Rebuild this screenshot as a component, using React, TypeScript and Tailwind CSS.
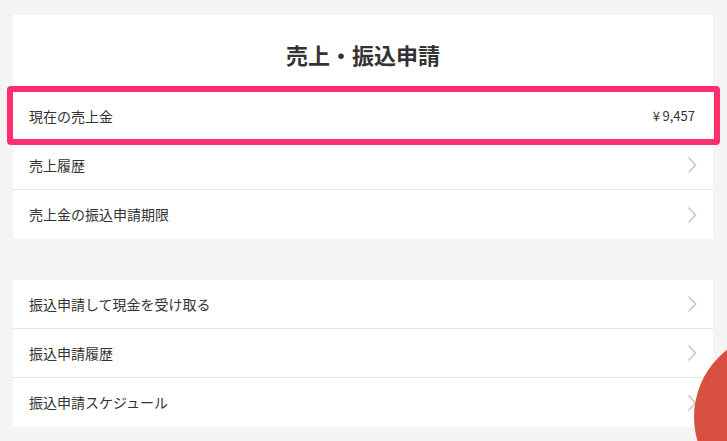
import { ReactNode } from 'react';

function Chevron() {
  return (
    <svg width="10" height="18" viewBox="0 0 10 18" fill="none" className="shrink-0">
      <path d="M1.5 1.5 L8.5 9 L1.5 16.5" stroke="#c9c9c9" strokeWidth="1.6" />
    </svg>
  );
}

function Row({ children, right, last }: { children: ReactNode; right?: ReactNode; last?: boolean }) {
  return (
    <div
      className={`flex h-[49px] items-center justify-between pl-4 pr-[16px] ${
        last ? '' : 'border-b border-[#e6e6e6]'
      }`}
    >
      <span className="text-[14px] text-[#333]">{children}</span>
      {right ?? <Chevron />}
    </div>
  );
}

export default function App() {
  return (
    <div
      className="relative h-[441px] w-full overflow-hidden bg-[#f4f4f4] px-[13px] pt-[15px]"
      style={{ fontFamily: '"Noto Sans CJK JP", "Noto Sans", sans-serif' }}
    >
      {/* Sales card */}
      <div className="w-[700px] bg-white">
        <div className="flex h-[77px] justify-center pt-[25px]">
          <h1 className="text-[22px] font-bold leading-[28px] text-[#333]">売上・振込申請</h1>
        </div>

        <div className="relative">
          <Row right={<span className="pr-[2px] text-[13px] text-[#333]">¥&thinsp;9,457</span>}>
            現在の売上金
          </Row>
          {/* highlight frame */}
          <div className="pointer-events-none absolute -top-[6px] -bottom-[4px] -left-[6px] -right-[7px] rounded-[4px] border-[6px] border-[#ff2e6f]" />
        </div>
        <Row>売上履歴</Row>
        <Row last>売上金の振込申請期限</Row>
      </div>

      {/* Transfer card */}
      <div className="mt-[41px] w-[700px] bg-white">
        <Row>振込申請して現金を受け取る</Row>
        <Row>振込申請履歴</Row>
        <Row last>振込申請スケジュール</Row>
      </div>

      {/* floating button peeking in */}
      <div className="absolute left-[694px] top-[332px] h-[170px] w-[170px] rounded-full bg-[#d8503f]" />
    </div>
  );
}
